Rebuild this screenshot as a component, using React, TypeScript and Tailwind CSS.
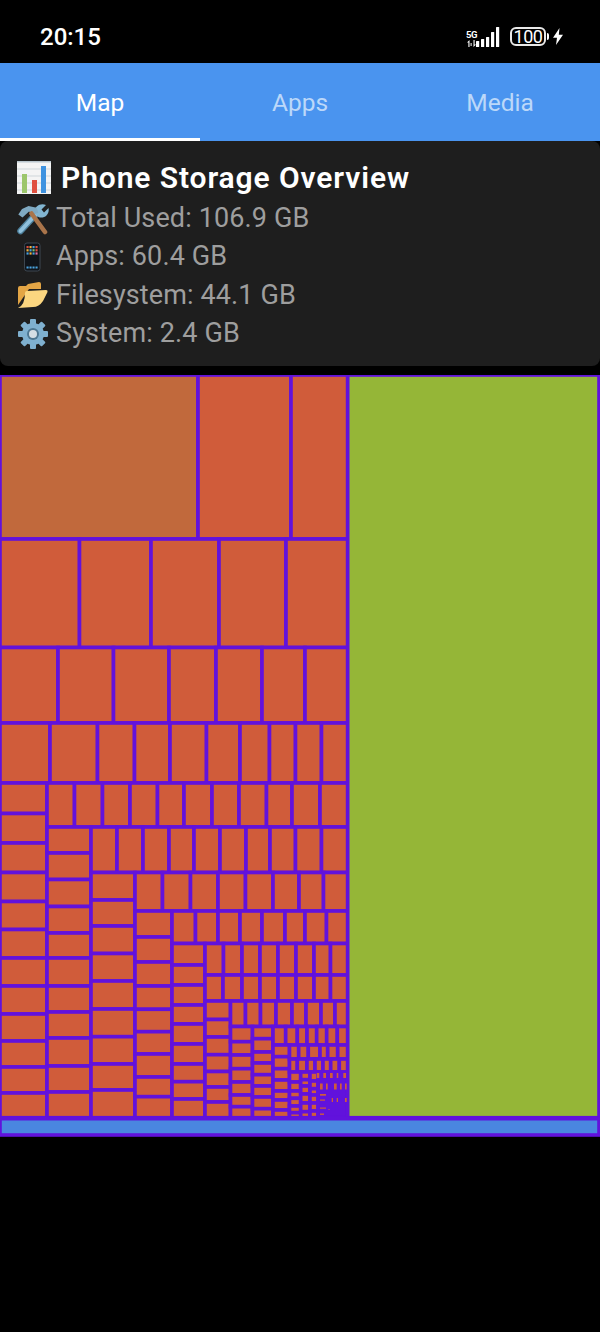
const ORANGE = "#d05c3a";
const STROKE = "#6112dc";

// each slice of the treemap is a small grid: [x boundaries, y boundaries]
const slices: [number[], number[]][] = [
  [[0, 198, 291, 347.7], [375, 539]],
  [[0, 79.5, 151, 219, 286, 347.7], [539, 647.5]],
  [[0, 58, 113.5, 169, 216, 262, 305, 347.7], [647.5, 723]],
  [[0, 50, 97.5, 134.5, 170, 206.5, 240, 269.5, 295.5, 321.5, 347.7], [723, 783]],
  [[0, 47], [783, 813.5, 843, 872.5, 901.5, 929.5, 958, 986, 1014, 1041, 1067, 1093, 1117.7]],
  [[47, 74.5, 102.5, 130, 157.5, 184, 212, 239, 266.5, 292, 320, 347.7], [783, 827]],
  [[47, 91], [827, 853, 879.5, 906.5, 933, 958, 986, 1012, 1038, 1066, 1092, 1117.7]],
  [[91, 117, 143, 169, 194, 220, 246, 270, 295.5, 321.5, 347.7], [827, 872.5]],
  [[91, 135], [872.5, 900, 926, 953.5, 981, 1009, 1036.7, 1064, 1090, 1117.7]],
  [[135, 162.5, 190.5, 218, 245.5, 273, 299, 323.5, 347.7], [872.5, 911]],
  [[135, 172], [911, 937, 962, 986, 1009.3, 1031.7, 1054, 1077, 1096.7, 1117.7]],
  [[172, 195.5, 218, 240, 262, 285, 305, 326.5, 347.7], [911, 943.5]],
  [[172, 205], [943.5, 965, 985, 1005, 1024, 1044, 1064, 1081.7, 1099, 1117.7]],
  [[205, 223.5, 242, 260, 278, 296, 314, 330.5, 347.7], [943.5, 975]],
  [[205, 223, 242, 260, 278, 296, 314, 330.5, 347.7], [975, 1001]],
  [[205, 230.5], [1001, 1019.5, 1037, 1054.7, 1071.5, 1087, 1102, 1117.7]],
  [[230.5, 245.5, 260.5, 276, 292, 306, 321, 335, 347.7], [1001, 1026.5]],
  [[230.5, 252.5], [1026.5, 1041.7, 1055, 1068.7, 1082, 1095, 1106.7, 1117.7]],
  [[252.5, 273], [1026.5, 1038.7, 1052, 1063, 1074.7, 1086, 1097, 1108.7, 1117.7]],
  [[273, 285.7, 297.3, 307, 316.7, 326.7, 337.3, 347.7], [1026.5, 1045]],
  [[273, 289.5], [1045, 1056.7, 1068.7, 1080, 1091, 1100, 1110, 1117.7]],
  [[289.5, 298.7, 308.3, 320, 327.7, 337.7, 347.7], [1045, 1059]],
  [[289.5, 297.3, 307, 315, 323, 330.7, 339.3, 347.7], [1059, 1072]],
  [[289.5, 300.7], [1072, 1082, 1091, 1098.3, 1106, 1112.7, 1117.7]],
  [[300.7, 310], [1072, 1079.7, 1086, 1094, 1103, 1111.7, 1117.7]],
  [[310, 318], [1072, 1081, 1088.7, 1095, 1103, 1111, 1117.7]],
];

// the last cells are so thin that only flecks survive between the strokes
const flecks = [
  [316.7, 1073, 2.6, 5], [323.3, 1073, 2.7, 5], [330, 1073, 2.7, 5], [336.7, 1073, 1.6, 5], [343.3, 1073, 2.7, 5],
  [320, 1083.5, 2.7, 6], [326, 1083.5, 1.7, 6], [334, 1083.5, 2.7, 6], [340, 1083.5, 1.7, 6], [345, 1083.5, 1.7, 6],
  [331.7, 1098, 1.3, 4], [336.7, 1098, 1.3, 4], [345, 1098, 1.7, 4],
  [320, 1094, 6, 1.7], [320, 1099.5, 5, 1.2], [320, 1107.5, 6, 1.2], [320, 1113.5, 4, 1.4], [328.5, 1109, 1, 1],
];

function Treemap() {
  const cells: number[][] = [];
  slices.forEach(([xs, ys]) => {
    for (let i = 0; i < xs.length - 1; i++) {
      for (let j = 0; j < ys.length - 1; j++) {
        cells.push([xs[i], ys[j], xs[i + 1] - xs[i], ys[j + 1] - ys[j]]);
      }
    }
  });

  return (
    <svg className="block w-[600px] h-[763px] mt-[9px]" viewBox="0 375 600 763">
      <g stroke={STROKE} strokeWidth="3.6">
        {cells.map(([x, y, w, h], i) => (
          <rect key={i} x={x} y={y} width={w} height={h} fill={i === 0 ? "#c1693c" : ORANGE} />
        ))}
        <rect x="318" y="1072" width="29.7" height="45.7" fill={STROKE} />
        <rect x="347.7" y="375" width="251.3" height="742.7" fill="#95b637" />
        <rect x="0" y="1118.7" width="599" height="16.3" fill="#4a86e0" />
      </g>
      {flecks.map(([x, y, w, h], i) => (
        <rect key={i} x={x} y={y} width={w} height={h} fill={ORANGE} />
      ))}
    </svg>
  );
}

function ChartIcon() {
  return (
    <svg width="34" height="34" viewBox="0 0 34 34" className="shrink-0">
      <rect x="0" y="0" width="34" height="33" fill="#f4f4f4" />
      <rect x="0" y="0" width="34" height="1.5" fill="#b9c6ce" />
      <path d="M0 8h34M0 15h34M0 22h34M0 29h34" stroke="#cfd6da" strokeWidth="1" />
      <rect x="5" y="13" width="5" height="19" fill="#9cc66b" />
      <rect x="15" y="19" width="5" height="13" fill="#e0503f" />
      <rect x="24" y="5" width="5" height="27" fill="#3f93e0" />
    </svg>
  );
}

function ToolsIcon() {
  return (
    <svg width="32" height="32" viewBox="0 0 32 32" className="shrink-0">
      <path d="M3.5 28 L21 9" stroke="#4d7f9a" strokeWidth="6.5" strokeLinecap="round" />
      <path d="M3.5 28 L21 9" stroke="#8fc0dc" strokeWidth="4" strokeLinecap="round" />
      <path d="M17.5 10 C16.5 4 23 -0.5 29 2 L24.5 6.5 L27 9.5 L31.5 5 C33 11 27 16.5 21.5 14Z" fill="#82b5d1" />
      <path d="M1.3 11.5 L5 6 L11.5 3 L19.7 4.7 L21.3 9.7 L16.3 11.5 L12 8.5 L5.5 14.5Z" fill="#7fa9c1" />
      <path d="M14.5 10.5 L28 29" stroke="#a9744a" strokeWidth="4.6" strokeLinecap="round" />
    </svg>
  );
}

function PhoneIcon() {
  const dots = ["#e0503f", "#f2b33d", "#4aa3e0", "#e0503f", "#f2b33d", "#4aa3e0", "#7cc36b", "#e0503f", "#4aa3e0", "#f2b33d", "#4aa3e0", "#e06fa0"];
  return (
    <svg width="32" height="32" viewBox="0 0 32 32" className="shrink-0">
      <rect x="7.5" y="2" width="15.5" height="28" rx="2.5" fill="#10141a" stroke="#3c4650" strokeWidth="1" />
      {dots.map((c, i) => (
        <rect key={i} x={9.5 + (i % 4) * 3} y={5 + Math.floor(i / 4) * 3.2} width="2.1" height="2.2" fill={c} />
      ))}
      <path d="M9.5 26.5h11.5" stroke="#4aa3e0" strokeWidth="2" strokeDasharray="2.1 0.9" />
    </svg>
  );
}

function FolderIcon() {
  return (
    <svg width="32" height="32" viewBox="0 0 32 32" className="shrink-0">
      <path d="M1 26 L1 9 Q1 7 3 7 L9 7 L11 5 L22 3 Q24 3 24 5 L24 10 L12 10Z" fill="#e3a545" />
      <path d="M1 29 Q8 26 8 14 Q8 12 10 12 L29 11 Q31 11 30.5 13 L26 22 Q22 28 16 28Z" fill="#fbd680" />
    </svg>
  );
}

function GearIcon() {
  const teeth = [0, 45, 90, 135, 180, 225, 270, 315];
  return (
    <svg width="32" height="32" viewBox="0 0 32 32" className="shrink-0">
      {teeth.map((a) => (
        <rect key={a} x="13" y="1" width="6" height="7" rx="1" fill="#7fb0cf" transform={`rotate(${a} 16 16)`} />
      ))}
      <circle cx="16" cy="16" r="11" fill="#7fb0cf" />
      <circle cx="16" cy="16" r="6" fill="#4d7690" />
      <circle cx="16" cy="16" r="4" fill="#d4dee4" />
    </svg>
  );
}

function StatusIcons() {
  return (
    <div className="flex items-center text-white">
      <div className="flex items-end h-[20px]">
        <div className="flex flex-col items-center w-[9px]">
          <span className="text-[9.5px] leading-[11px] font-bold tracking-[-0.5px]">5G</span>
          <svg width="9" height="7" viewBox="0 0 9 7" fill="white">
            <path d="M2.5 0L2.5 7H1.4V2.5H0ZM6.5 7V0H7.6V4.5H9Z" />
            <rect x="3.6" y="3" width="1" height="3" />
          </svg>
        </div>
        <svg width="24" height="20" viewBox="0 0 24 20" fill="white">
          <rect x="0" y="14" width="3.2" height="6" rx="0.5" />
          <rect x="5" y="12" width="3.2" height="8" rx="0.5" />
          <rect x="10" y="10" width="3.2" height="10" rx="0.5" />
          <rect x="15" y="5" width="3.2" height="15" rx="0.5" />
          <rect x="20" y="0" width="3.2" height="20" rx="0.5" />
        </svg>
      </div>
      <div className="ml-[10px] w-[36px] h-[19px] border-2 border-[#e8e8e8] rounded-[6px] flex items-center justify-center text-[18px] leading-none font-normal tracking-[-0.5px]">
        100
      </div>
      <div className="ml-[1px] w-[2px] h-[7px] bg-white rounded-r-sm" />
      <svg className="ml-[4px]" width="10" height="17" viewBox="0 0 10 17" fill="white">
        <path d="M6.5 0L0 9.8H4L3 17L10 6.8H5.8Z" />
      </svg>
    </div>
  );
}

const rows = [
  { icon: <ToolsIcon />, text: "Total Used: 106.9 GB" },
  { icon: <PhoneIcon />, text: "Apps: 60.4 GB" },
  { icon: <FolderIcon />, text: "Filesystem: 44.1 GB" },
  { icon: <GearIcon />, text: "System: 2.4 GB" },
];

export default function App() {
  return (
    <div className="w-[600px] h-[1332px] bg-black overflow-hidden font-['Roboto',sans-serif]">
      {/* Status bar */}
      <div className="h-[63px] pl-[40px] pr-[37px] flex items-center justify-between text-white">
        <span className="text-[24px] font-medium leading-none mt-[10px]">20:15</span>
        <div className="mt-[10px]">
          <StatusIcons />
        </div>
      </div>

      {/* Tabs */}
      <div className="h-[78px] bg-[#4a94ef] flex pt-[2px]">
        <div className="relative flex-1 flex items-center justify-center text-[24.5px] text-white">
          Map
          <div className="absolute left-0 right-0 bottom-0 h-[3px] bg-white" />
        </div>
        <div className="flex-1 flex items-center justify-center text-[24.5px] text-[#bcd8f9]">Apps</div>
        <div className="flex-1 flex items-center justify-center text-[24.5px] text-[#bcd8f9]">Media</div>
      </div>

      {/* Summary card */}
      <div className="h-[225px] bg-[#1e1e1e] rounded-lg pl-[17px] pt-[18px]">
        <div className="flex items-center gap-[10px] h-[38px]">
          <ChartIcon />
          <span className="text-[30px] font-semibold tracking-[0.9px] text-white leading-none">Phone Storage Overview</span>
        </div>
        <div className="mt-[2.5px]">
          {rows.map((r) => (
            <div key={r.text} className="flex items-center gap-[7px] h-[38.3px]">
              {r.icon}
              <span className="text-[27px] tracking-[0.12px] text-[#9e9e9e] leading-none">{r.text}</span>
            </div>
          ))}
        </div>
      </div>

      <Treemap />
    </div>
  );
}
